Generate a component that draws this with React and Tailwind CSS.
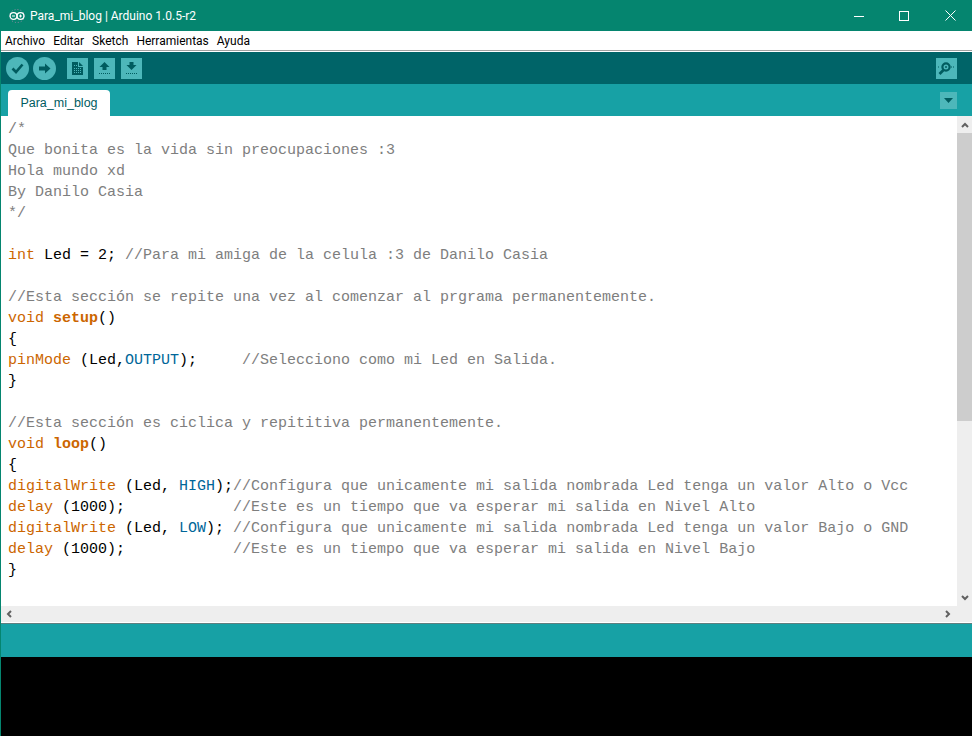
const K = ({ children }) => <span className="text-[#cc6600]">{children}</span>;
const B = ({ children }) => <span className="font-bold text-[#cc6600]">{children}</span>;
const C = ({ children }) => <span className="text-[#006699]">{children}</span>;
const G = ({ children }) => <span className="text-[#7e7e7e]">{children}</span>;

const lines = [
  <G>/*</G>,
  <G>Que bonita es la vida sin preocupaciones :3</G>,
  <G>Hola mundo xd</G>,
  <G>By Danilo Casia</G>,
  <G>*/</G>,
  '',
  <><K>int</K> Led = 2; <G>//Para mi amiga de la celula :3 de Danilo Casia</G></>,
  '',
  <G>//Esta sección se repite una vez al comenzar al prgrama permanentemente.</G>,
  <><K>void</K> <B>setup</B>()</>,
  '{',
  <><K>pinMode</K> (Led,<C>OUTPUT</C>);     <G>//Selecciono como mi Led en Salida.</G></>,
  '}',
  '',
  <G>//Esta sección es ciclica y repititiva permanentemente.</G>,
  <><K>void</K> <B>loop</B>()</>,
  '{',
  <><K>digitalWrite</K> (Led, <C>HIGH</C>);<G>//Configura que unicamente mi salida nombrada Led tenga un valor Alto o Vcc</G></>,
  <><K>delay</K> (1000);            <G>//Este es un tiempo que va esperar mi salida en Nivel Alto</G></>,
  <><K>digitalWrite</K> (Led, <C>LOW</C>); <G>//Configura que unicamente mi salida nombrada Led tenga un valor Bajo o GND</G></>,
  <><K>delay</K> (1000);            <G>//Este es un tiempo que va esperar mi salida en Nivel Bajo</G></>,
  '}',
];

function ToolSquare({ children, className = 'ml-[6px]' }) {
  return <div className={`w-[21px] h-[21px] bg-[#4db7ba] flex items-center justify-center ${className}`}>{children}</div>;
}

function Arrow({ up }) {
  return (
    <svg width="15" height="15" viewBox="0 0 15 15">
      <path d={up ? 'M7.5 1 L12.5 6 H9.5 V9 H5.5 V6 H2.5 Z' : 'M5.5 1 H9.5 V4 H12.5 L7.5 9 L2.5 4 H5.5 Z'} fill="#005c5f" />
      <path d="M2 12.5 H13" stroke="#005c5f" strokeWidth="1" strokeDasharray="1 1" />
    </svg>
  );
}

export default function App() {
  return (
    <div className="w-[972px] h-[736px] overflow-hidden flex flex-col bg-[#05856f] pl-px font-['Liberation_Sans',sans-serif]">
      {/* title bar */}
      <div className="h-[31px] -ml-px flex items-center text-white bg-[#05856f] shrink-0">
        <svg className="ml-[9px]" width="16" height="14" viewBox="0 0 16 14" fill="none" stroke="#fff" strokeWidth="1.3">
          <ellipse cx="8" cy="7" rx="7.5" ry="6.5" stroke="#b58ab5" strokeWidth="0.8" strokeDasharray="1 2" />
          <circle cx="4.5" cy="7" r="3.4" />
          <circle cx="11.5" cy="7" r="3.4" />
          <path d="M3 7 H6 M10 7 H13 M11.5 5.5 V8.5" strokeWidth="1" />
        </svg>
        <span className="ml-[5px] text-[12px] font-['Roboto',sans-serif]">Para_mi_blog | Arduino 1.0.5-r2</span>
        <div className="ml-auto flex items-center">
          <svg width="10" height="10" viewBox="0 0 10 10" className="mr-[35px]"><path d="M0 5.5 H10" stroke="#fff" /></svg>
          <svg width="10" height="10" viewBox="0 0 10 10" className="mr-[36px]"><rect x="0.5" y="0.5" width="9" height="9" fill="none" stroke="#fff" /></svg>
          <svg width="11" height="11" viewBox="0 0 11 11" className="mr-[16px]"><path d="M0.5 0.5 L10.5 10.5 M10.5 0.5 L0.5 10.5" stroke="#fff" /></svg>
        </div>
      </div>

      {/* menu */}
      <div className="h-[19px] bg-white flex items-center pl-[4px] gap-[8px] text-[12px] text-black font-['Roboto',sans-serif] shrink-0">
        <span>Archivo</span>
        <span>Editar</span>
        <span>Sketch</span>
        <span>Herramientas</span>
        <span>Ayuda</span>
      </div>
      <div className="h-px bg-[#a0a0a0] shrink-0" />
      <div className="h-px bg-white shrink-0" />

      {/* toolbar */}
      <div className="h-[32px] bg-[#006468] flex items-center pl-[5px] shrink-0">
        <div className="w-[23px] h-[23px] rounded-full bg-[#4db7ba] flex items-center justify-center">
          <svg width="13" height="11" viewBox="0 0 13 11" fill="none"><path d="M1.5 5.5 L5 9 L11.5 1.5" stroke="#005c5f" strokeWidth="2.6" /></svg>
        </div>
        <div className="w-[23px] h-[23px] rounded-full bg-[#4db7ba] flex items-center justify-center ml-[4px]">
          <svg width="13" height="11" viewBox="0 0 13 11"><path d="M7 0.5 L12.5 5.5 L7 10.5 V7.5 H1 V3.5 H7 Z" fill="#005c5f" /></svg>
        </div>
        <ToolSquare className="ml-[11px]">
          <svg width="11" height="13" viewBox="0 0 11 13">
            <path d="M0 0 H6 V5 H11 V13 H0 Z" fill="#005c5f" />
            <path d="M7 0 L11 4 H7 Z" fill="#005c5f" />
            <path d="M2 3.5 H5 M2 6.5 H9 M2 8.5 H9 M2 10.5 H9" stroke="#4db7ba" strokeDasharray="1 1" />
          </svg>
        </ToolSquare>
        <ToolSquare><Arrow up /></ToolSquare>
        <ToolSquare><Arrow /></ToolSquare>
        <ToolSquare className="ml-auto mr-[15px]">
          <svg width="17" height="15" viewBox="0 0 17 15" fill="none">
            <circle cx="8" cy="6" r="3.6" stroke="#005c5f" strokeWidth="2.2" />
            <circle cx="8" cy="6" r="1" fill="#005c5f" />
            <path d="M5.5 9 L1.5 13" stroke="#005c5f" strokeWidth="2.6" />
            <path d="M0 6 H2 M13 6 H17" stroke="#005c5f" strokeDasharray="1 1" />
          </svg>
        </ToolSquare>
      </div>

      {/* tabs */}
      <div className="h-[32px] bg-[#17a1a5] flex items-end pl-[7px] shrink-0">
        <div className="w-[102px] h-[26px] bg-white rounded-t-[4px] flex items-center justify-center text-[12.5px] text-[#005c5f]">
          Para_mi_blog
        </div>
        <div className="ml-auto mr-[15px] mb-[7px] w-[17px] h-[17px] bg-[#4db7ba] flex items-center justify-center">
          <svg width="9" height="5" viewBox="0 0 9 5"><path d="M0 0 H9 L4.5 5 Z" fill="#005c5f" /></svg>
        </div>
      </div>

      {/* editor */}
      <div className="h-[506px] flex flex-col bg-white shrink-0">
        <div className="h-[490px] flex">
          <div className="flex-1 pl-[7px] pt-[3px] overflow-hidden font-['Liberation_Mono',monospace] text-[15px] leading-[21px] whitespace-pre text-black">
            {lines.map((line, i) => (
              <div key={i} className="h-[21px]">{line}</div>
            ))}
          </div>
          {/* vertical scrollbar */}
          <div className="w-[15px] bg-[#eeeeee] flex flex-col shrink-0">
            <div className="h-[17px] flex items-center justify-center">
              <svg width="8" height="6" viewBox="0 0 8 6" fill="none"><path d="M1 5 L4 2 L7 5" stroke="#606060" strokeWidth="2" /></svg>
            </div>
            <div className="h-[288px] bg-[#cdcdcd]" />
            <div className="mt-auto h-[17px] flex items-center justify-center">
              <svg width="8" height="6" viewBox="0 0 8 6" fill="none"><path d="M1 1 L4 4 L7 1" stroke="#606060" strokeWidth="2" /></svg>
            </div>
          </div>
        </div>
        {/* horizontal scrollbar */}
        <div className="h-[16px] bg-[#eeeeee] flex items-center justify-between pl-[5px] pr-[21px]">
          <svg width="6" height="8" viewBox="0 0 6 8" fill="none"><path d="M5 1 L2 4 L5 7" stroke="#606060" strokeWidth="2" /></svg>
          <svg width="6" height="8" viewBox="0 0 6 8" fill="none"><path d="M1 1 L4 4 L1 7" stroke="#606060" strokeWidth="2" /></svg>
        </div>
      </div>
      <div className="h-px bg-white shrink-0" />
      <div className="h-px bg-[#5f7f80] shrink-0" />

      {/* status + console */}
      <div className="h-[33px] bg-[#17a1a5] shrink-0" />
      <div className="flex-1 bg-black" />
    </div>
  );
}
